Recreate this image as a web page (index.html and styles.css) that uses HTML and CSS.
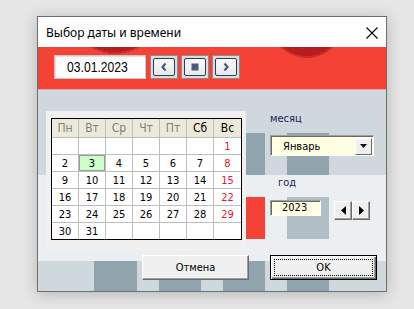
FILE: index.html
```html
<!DOCTYPE html>
<html lang="ru">
<head>
<meta charset="utf-8">
<title>Выбор даты и времени</title>
<link rel="stylesheet" href="styles.css">
</head>
<body>
<div class="window">
  <div class="titlebar">
    <span class="title">Выбор даты и времени</span>
    <svg class="close" width="12" height="12" viewBox="0 0 12 12"><path d="M0.5 0.5 L11.5 11.5 M11.5 0.5 L0.5 11.5" stroke="#000" stroke-width="1.1" fill="none"/></svg>
  </div>
  <div class="dialog">
    <div class="datebar">
      <div class="datebox"><span class="datetext">03.01.2023</span></div>
      <div class="navbtns">
        <div class="nav"><span class="nav-in"><svg width="8" height="10" viewBox="0 0 8 10"><path d="M5.5 1.5 L2.5 5 L5.5 8.5" stroke="#4a5a7c" stroke-width="2.2" fill="none"/></svg></span></div>
        <div class="nav"><span class="nav-in"><svg width="8" height="8" viewBox="0 0 8 8"><rect x="0.5" y="0.5" width="7" height="7" fill="#4a5a7c"/></svg></span></div>
        <div class="nav"><span class="nav-in"><svg width="8" height="10" viewBox="0 0 8 10"><path d="M2.5 1.5 L5.5 5 L2.5 8.5" stroke="#4a5a7c" stroke-width="2.2" fill="none"/></svg></span></div>
      </div>
    </div>
    <div class="main">
      <div class="content">
        <div class="panel">
          <div class="cal">
            <div class="hd wd">Пн</div><div class="hd wd">Вт</div><div class="hd wd">Ср</div><div class="hd wd">Чт</div><div class="hd wd">Пт</div><div class="hd">Сб</div><div class="hd">Вс</div>
            <div></div><div></div><div></div><div></div><div></div><div></div><div class="sun">1</div>
            <div>2</div><div class="today">3</div><div>4</div><div>5</div><div>6</div><div>7</div><div class="sun">8</div>
            <div>9</div><div>10</div><div>11</div><div>12</div><div>13</div><div>14</div><div class="sun">15</div>
            <div>16</div><div>17</div><div>18</div><div>19</div><div>20</div><div>21</div><div class="sun">22</div>
            <div>23</div><div>24</div><div>25</div><div>26</div><div>27</div><div>28</div><div class="sun">29</div>
            <div>30</div><div>31</div><div></div><div></div><div></div><div></div><div></div>
          </div>
        </div>
        <div class="side">
          <div class="lbl lbl-month">месяц</div>
          <div class="combo">
            <span class="combo-text">Январь</span>
            <span class="combo-btn"><svg width="7" height="4" viewBox="0 0 7 4"><path d="M0 0 H7 L3.5 4 Z" fill="#000"/></svg></span>
          </div>
          <div class="lbl lbl-year">год</div>
          <div class="year-row">
            <div class="yearbox">2023</div>
            <div class="spin">
              <span class="spin-btn"><svg width="5" height="9" viewBox="0 0 5 9"><path d="M5 0 V9 L0 4.5 Z" fill="#000"/></svg></span>
              <span class="spin-btn"><svg width="5" height="9" viewBox="0 0 5 9"><path d="M0 0 V9 L5 4.5 Z" fill="#000"/></svg></span>
            </div>
          </div>
        </div>
      </div>
      <div class="actions">
        <div class="btn">Отмена</div>
        <div class="btn btn-default"><span class="focus">OK</span></div>
      </div>
    </div>
  </div>
</div>
</body>
</html>
```
FILE: styles.css
```css
html, body {
  margin: 0;
  padding: 0;
}
body {
  width: 414px;
  height: 309px;
  overflow: hidden;
  background: #e6e6e6;
  font-family: "DejaVu Sans Condensed", "DejaVu Sans", sans-serif;
  font-stretch: condensed;
  font-size: 11px;
  color: #000;
}
.window {
  margin: 16px 0 0 37px;
  width: 350px;
  box-sizing: border-box;
  border: 1px solid #6f6f6f;
  box-shadow: 0 2px 14px rgba(0, 0, 0, 0.22);
  background: #fff;
}
.titlebar {
  height: 30px;
  display: flex;
  align-items: center;
  justify-content: space-between;
  padding: 0 8px 0 8px;
  background: #fff;
}
.title {
  font-family: "Noto Sans", "Open Sans", sans-serif;
  font-stretch: normal;
  font-size: 12px;
  color: #000;
}
.close {
  display: block;
  margin-top: 1px;
}
.datebar {
  border-bottom: 1px solid #e2aaa6;
  display: flex;
  align-items: flex-start;
  padding: 8px 0 0 16px;
  box-sizing: border-box;
  height: 43px;
  background:
    radial-gradient(circle 48px at 77px -41px, #b81d1d 0 46px, #cd2e2b 46px 48px, transparent 48px),
    radial-gradient(circle 37px at 269px -26px, #b81d1d 0 35px, #cd2e2b 35px 37px, transparent 37px),
    #f44336;
}
.datebox {
  width: 92px;
  height: 24px;
  box-sizing: border-box;
  background: #fff;
  border: 1px solid #c9c9c9;
  box-shadow: inset 1px 1px 0 #e0e0e0;
  padding-left: 12px;
  color: #000;
}
.datetext {
  display: inline-block;
  font-family: "Liberation Sans", Arial, sans-serif;
  font-stretch: normal;
  font-size: 15px;
  line-height: 22px;
  transform: scaleX(0.81);
  transform-origin: left center;
}
.navbtns {
  display: flex;
  gap: 3px;
  margin-left: 4px;
}
.nav {
  width: 28px;
  height: 24px;
  box-sizing: border-box;
  border: 1px solid #8c8c8c;
  background: #dcdcdc;
  padding: 2px;
  display: flex;
}
.nav-in {
  flex: 1;
  border: 1px solid #20406e;
  border-radius: 2px;
  background: linear-gradient(#fbfbfb, #e8e8e8);
  display: flex;
  align-items: center;
  justify-content: center;
}
.nav-in svg { display: block; }
.main {
  height: 201px;
  box-sizing: border-box;
  padding: 21px 0 0 8px;
  background:
    linear-gradient(#90a4ae, #90a4ae) 185px 43px / 42px 42px no-repeat,
    linear-gradient(#90a4ae, #90a4ae) 249px 43px / 42px 42px no-repeat,
    linear-gradient(#f44336, #f44336) 185px 107px / 42px 42px no-repeat,
    linear-gradient(#b0bec5, #b0bec5) 249px 107px / 42px 42px no-repeat,
    linear-gradient(#90a4ae, #90a4ae) 56px 171px / 43px 30px no-repeat,
    linear-gradient(#90a4ae, #90a4ae) 121px 171px / 42px 30px no-repeat,
    linear-gradient(#90a4ae, #90a4ae) 185px 171px / 42px 30px no-repeat,
    linear-gradient(#90a4ae, #90a4ae) 249px 171px / 42px 30px no-repeat,
    linear-gradient(#cfd8dc 0 85px, #eceff1 85px 171px, #cfd8dc 171px);
}
.content {
  display: flex;
}
.panel {
  width: 200px;
  height: 139px;
  box-sizing: border-box;
  padding: 7px 0 0 5px;
  background: #f0f0f0;
}
.cal {
  display: grid;
  grid-template-columns: repeat(6, 26px) 27px;
  grid-template-rows: 18px repeat(6, 16px);
  gap: 1px;
  width: max-content;
  border: 1px solid #000;
  background: #bdbdbd;
}
.cal > div {
  background: #fff;
  display: flex;
  align-items: center;
  justify-content: center;
  font-size: 11px;
  line-height: 1;
}
.cal > .hd {
  background: #ece9d8;
  color: #000;
  font-size: 12px;
}
.cal > .hd.wd {
  color: #808080;
}
.cal > .sun {
  color: #ee1233;
}
.cal > .today {
  background: #ccffcc;
  box-shadow: inset 0 0 0 1px #9a9a9a;
}
.side {
  margin-left: 24px;
  display: flex;
  flex-direction: column;
  align-items: flex-start;
}
.lbl {
  color: #1c1c5a;
  line-height: 13px;
}
.lbl-month {
  margin-top: 1px;
}
.combo {
  margin-top: 10px;
  width: 104px;
  height: 21px;
  box-sizing: border-box;
  background: #ffffe1;
  border: 1px solid;
  border-color: #a0a0a0 #fff #fff #a0a0a0;
  box-shadow: inset 1px 1px 0 #696969;
  display: flex;
  align-items: center;
  justify-content: space-between;
}
.combo-text {
  padding-left: 12px;
  padding-top: 1px;
}
.combo-btn {
  width: 17px;
  height: 17px;
  margin-right: 1px;
  margin-top: 1px;
  box-sizing: border-box;
  background: #f0f0f0;
  border: 1px solid;
  border-color: #fff #696969 #696969 #fff;
  display: flex;
  align-items: center;
  justify-content: center;
}
.combo-btn svg { display: block; }
.lbl-year {
  margin-top: 20px;
  margin-left: 8px;
}
.year-row {
  display: flex;
  align-items: flex-start;
  margin-top: 11px;
}
.yearbox {
  width: 51px;
  height: 16px;
  box-sizing: border-box;
  background: #ffffe1;
  border: 1px solid;
  border-color: #a0a0a0 #fff #fff #a0a0a0;
  box-shadow: inset 1px 1px 0 #696969;
  padding-left: 11px;
  line-height: 14px;
}
.spin {
  display: flex;
  margin-left: 13px;
  margin-top: 1px;
}
.spin-btn {
  width: 18px;
  height: 19px;
  box-sizing: border-box;
  background: #f0f0f0;
  border: 1px solid;
  border-color: #fff #696969 #696969 #fff;
  box-shadow: inset -1px -1px 0 #a0a0a0;
  display: flex;
  align-items: center;
  justify-content: center;
}
.spin-btn svg { display: block; }
.actions {
  display: flex;
  gap: 21px;
  margin: 5px 0 0 96px;
}
.btn {
  width: 107px;
  height: 25px;
  box-sizing: border-box;
  background: #f0f0f0;
  border: 1px solid;
  border-color: #fff #696969 #696969 #fff;
  box-shadow: inset -1px -1px 0 #a0a0a0;
  display: flex;
  align-items: center;
  justify-content: center;
  font-size: 11px;
}
.btn-default {
  border: 1px solid #000;
  box-shadow: inset 1px 1px 0 #fff, inset -1px -1px 0 #696969, inset -2px -2px 0 #a0a0a0;
  padding: 3px;
}
.focus {
  flex: 1;
  align-self: stretch;
  border: 1px dotted #000;
  display: flex;
  align-items: center;
  justify-content: center;
}
```
